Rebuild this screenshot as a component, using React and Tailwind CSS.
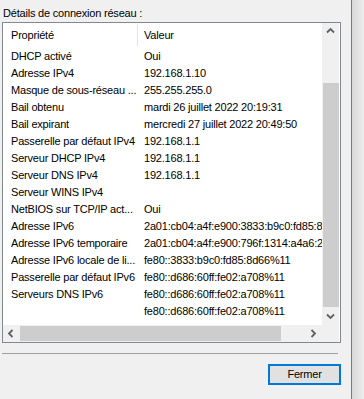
import React from "react";

const ROWS = [
  ["DHCP activé", "Oui"],
  ["Adresse IPv4", "192.168.1.10"],
  ["Masque de sous-réseau ...", "255.255.255.0"],
  ["Bail obtenu", "mardi 26 juillet 2022 20:19:31"],
  ["Bail expirant", "mercredi 27 juillet 2022 20:49:50"],
  ["Passerelle par défaut IPv4", "192.168.1.1"],
  ["Serveur DHCP IPv4", "192.168.1.1"],
  ["Serveur DNS IPv4", "192.168.1.1"],
  ["Serveur WINS IPv4", ""],
  ["NetBIOS sur TCP/IP act...", "Oui"],
  ["Adresse IPv6", "2a01:cb04:a4f:e900:3833:b9c0:fd85:8d66"],
  ["Adresse IPv6 temporaire", "2a01:cb04:a4f:e900:796f:1314:a4a6:2c1e"],
  ["Adresse IPv6 locale de li...", "fe80::3833:b9c0:fd85:8d66%11"],
  ["Passerelle par défaut IPv6", "fe80::d686:60ff:fe02:a708%11"],
  ["Serveurs DNS IPv6", "fe80::d686:60ff:fe02:a708%11"],
  ["", "fe80::d686:60ff:fe02:a708%11"],
];

// little scrollbar arrows
function Arrow({ dir }) {
  const pts = {
    up: "1,5.5 4.5,2 8,5.5",
    down: "1,2.5 4.5,6 8,2.5",
    left: "5.5,1 2,4.5 5.5,8",
    right: "2.5,1 6,4.5 2.5,8",
  }[dir];
  return (
    <svg width="9" height="9" viewBox="0 0 9 9">
      <polyline points={pts} fill="none" stroke="#606060" strokeWidth="1.8" />
    </svg>
  );
}

export default function App() {
  return (
    <div className="w-[364px] h-[399px] bg-[#f0f0f0] flex overflow-hidden text-[11px] tracking-[-0.2px] text-black font-['Liberation_Sans',Arial,sans-serif]">
      <div className="w-[351px] flex flex-col pl-[2px]">
        {/* Title */}
        <div className="h-[22px] pt-[5px] pl-[1px] leading-[16px]">Détails de connexion réseau :</div>

        {/* List box */}
        <div className="w-[339px] h-[321px] border border-[#828790] bg-white flex flex-col">
          <div className="flex h-[302px]">
            <div className="w-[319px] overflow-hidden flex flex-col">
              <div className="h-[25px] flex items-center shrink-0">
                <div className="w-[134px] pl-[8px]">Propriété</div>
                <div className="w-px h-[22px] bg-[#e5e5e5] self-start mt-px" />
                <div className="pl-[6px]">Valeur</div>
              </div>
              {ROWS.map(([k, v], i) => (
                <div key={i} className="h-[17px] flex items-center shrink-0 whitespace-nowrap">
                  <div className="w-[135px] shrink-0 pl-[8px]">{k}</div>
                  <div className="pl-[6px]">{v}</div>
                </div>
              ))}
            </div>
            {/* Vertical scrollbar */}
            <div className="w-[17px] bg-[#f0f0f0] flex flex-col">
              <div className="h-[17px] flex items-center justify-center"><Arrow dir="up" /></div>
              <div className="flex-1 pt-[43px] pl-px">
                <div className="h-[224px] bg-[#cdcdcd]" />
              </div>
              <div className="h-[17px] flex items-center justify-center"><Arrow dir="down" /></div>
            </div>
            <div className="w-px" />
          </div>
          {/* Horizontal scrollbar */}
          <div className="flex h-[17px]">
            <div className="w-[319px] bg-[#f0f0f0] flex">
              <div className="w-[17px] flex items-center justify-center"><Arrow dir="left" /></div>
              <div className="flex-1 py-px">
                <div className="w-[261px] h-full bg-[#cdcdcd]" />
              </div>
              <div className="w-[17px] flex items-center justify-center"><Arrow dir="right" /></div>
            </div>
            <div className="w-[17px] bg-[#f0f0f0]" />
          </div>
        </div>

        {/* Separator */}
        <div className="mt-[10px] h-px w-[336px] bg-[#a0a0a0]" />

        {/* Button */}
        <div className="mt-[10px] flex justify-end pr-[10px]">
          <button className="w-[73px] h-[21px] border-2 border-[#0078d7] bg-[#e1e1e1] flex items-center justify-center leading-none">
            Fermer
          </button>
        </div>
      </div>

      {/* Window edge */}
      <div className="w-px bg-[#7a7a7a]" />
      <div className="flex-1 bg-gradient-to-r from-[#d8d8d8] to-[#ededed]" />
    </div>
  );
}
